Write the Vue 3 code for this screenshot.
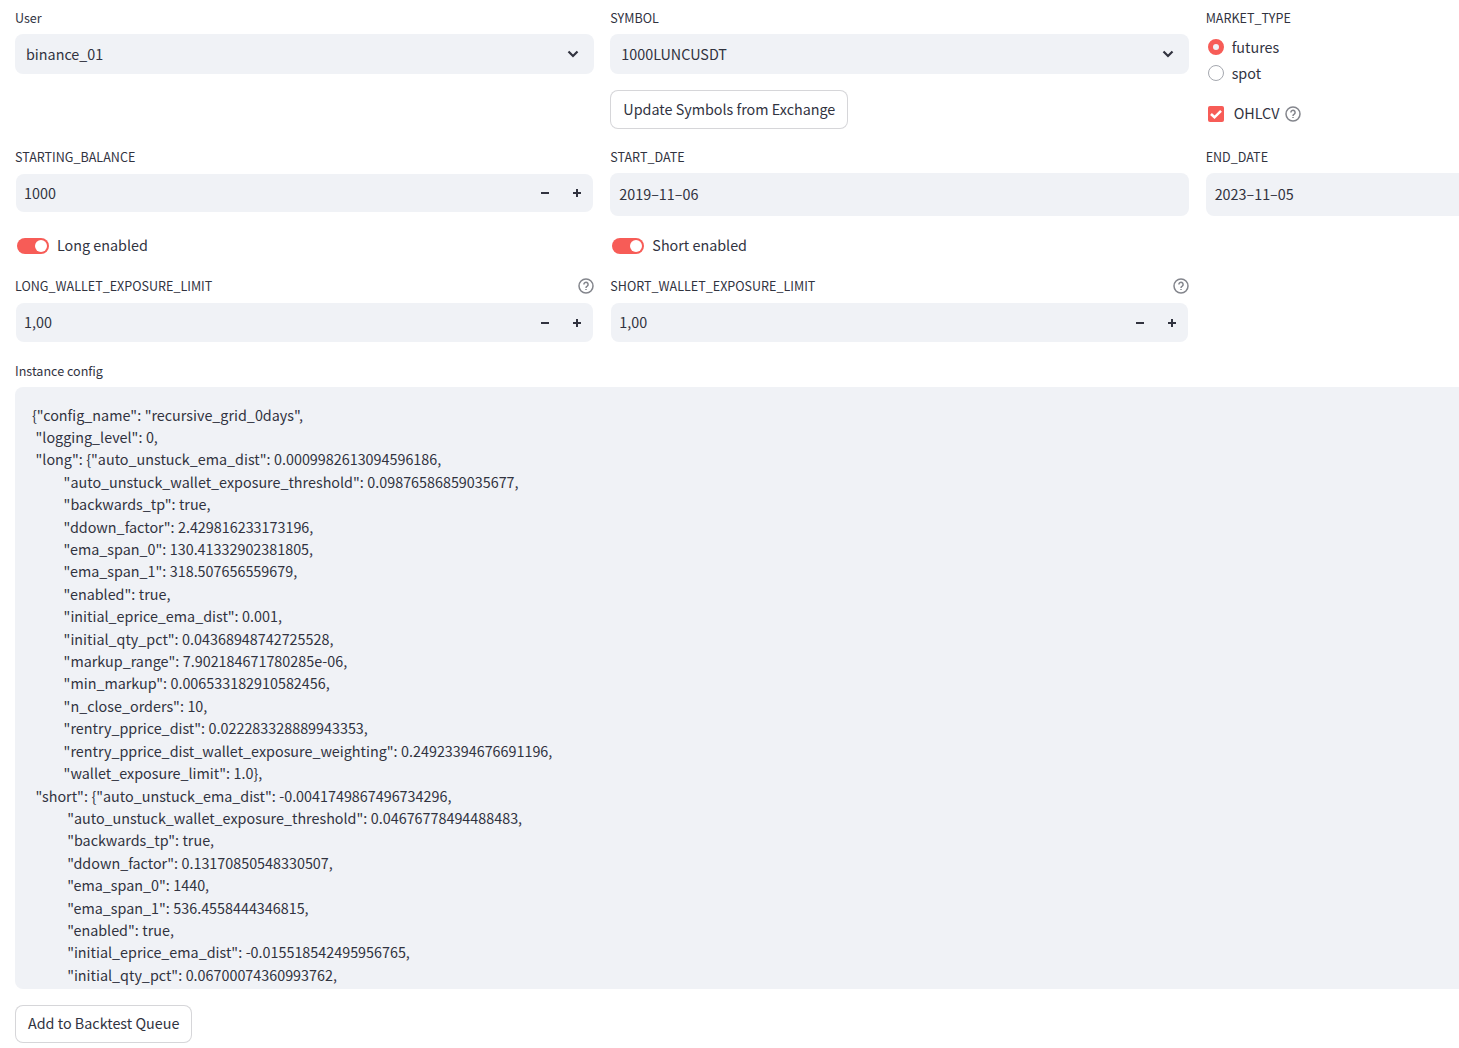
<script setup>
const config = `{"config_name": "recursive_grid_0days",
 "logging_level": 0,
 "long": {"auto_unstuck_ema_dist": 0.0009982613094596186,
         "auto_unstuck_wallet_exposure_threshold": 0.09876586859035677,
         "backwards_tp": true,
         "ddown_factor": 2.429816233173196,
         "ema_span_0": 130.41332902381805,
         "ema_span_1": 318.507656559679,
         "enabled": true,
         "initial_eprice_ema_dist": 0.001,
         "initial_qty_pct": 0.04368948742725528,
         "markup_range": 7.902184671780285e-06,
         "min_markup": 0.006533182910582456,
         "n_close_orders": 10,
         "rentry_pprice_dist": 0.022283328889943353,
         "rentry_pprice_dist_wallet_exposure_weighting": 0.24923394676691196,
         "wallet_exposure_limit": 1.0},
 "short": {"auto_unstuck_ema_dist": -0.0041749867496734296,
          "auto_unstuck_wallet_exposure_threshold": 0.04676778494488483,
          "backwards_tp": true,
          "ddown_factor": 0.13170850548330507,
          "ema_span_0": 1440,
          "ema_span_1": 536.4558444346815,
          "enabled": true,
          "initial_eprice_ema_dist": -0.015518542495956765,
          "initial_qty_pct": 0.06700074360993762,`
</script>

<template>
  <div class="page">
    <section class="row first">
      <div class="col">
        <div class="label">User</div>
        <div class="select">
          <span class="txt">binance_01</span>
          <svg class="chev" viewBox="0 0 12 8"><polyline points="1.5,1.5 6,6 10.5,1.5" /></svg>
        </div>
      </div>
      <div class="col">
        <div class="label">SYMBOL</div>
        <div class="select">
          <span class="txt">1000LUNCUSDT</span>
          <svg class="chev" viewBox="0 0 12 8"><polyline points="1.5,1.5 6,6 10.5,1.5" /></svg>
        </div>
        <button class="btn update">Update Symbols from Exchange</button>
      </div>
      <div class="col">
        <div class="label">MARKET_TYPE</div>
        <div class="radio"><span class="dot on"></span><span class="txt">futures</span></div>
        <div class="radio"><span class="dot"></span><span class="txt">spot</span></div>
        <div class="check">
          <span class="box">
            <svg viewBox="0 0 16 16"><polyline points="3,8 6.5,11.3 13,4.8" /></svg>
          </span>
          <span class="txt check-text">OHLCV</span>
          <svg class="help" viewBox="0 0 16 16">
            <circle cx="8" cy="8" r="7" />
            <path d="M5.9 6.4a2.1 2.1 0 1 1 3.3 1.7c-.8.5-1.2 1-1.2 1.8" />
            <path d="M8 11.1v1" />
          </svg>
        </div>
      </div>
    </section>

    <section class="row second">
      <div class="col">
        <div class="label">STARTING_BALANCE</div>
        <div class="number short-h">
          <span class="txt value">1000</span>
          <span class="step"><svg viewBox="0 0 10 10"><path d="M1 5h8" /></svg></span>
          <span class="step"><svg viewBox="0 0 10 10"><path d="M1 5h8M5 1v8" /></svg></span>
        </div>
      </div>
      <div class="col">
        <div class="label">START_DATE</div>
        <div class="date">2019–11–06</div>
      </div>
      <div class="col">
        <div class="label">END_DATE</div>
        <div class="date">2023–11–05</div>
      </div>
    </section>

    <section class="row third">
      <div class="toggle"><span class="track"><span class="knob"></span></span><span class="txt">Long enabled</span></div>
      <div class="toggle"><span class="track"><span class="knob"></span></span><span class="txt">Short enabled</span></div>
    </section>

    <section class="row fourth">
      <div class="col">
        <div class="label between">
          <span>LONG_WALLET_EXPOSURE_LIMIT</span>
          <svg class="help" viewBox="0 0 16 16">
            <circle cx="8" cy="8" r="7" />
            <path d="M5.9 6.4a2.1 2.1 0 1 1 3.3 1.7c-.8.5-1.2 1-1.2 1.8" />
            <path d="M8 11.1v1" />
          </svg>
        </div>
        <div class="number">
          <span class="txt value">1,00</span>
          <span class="step"><svg viewBox="0 0 10 10"><path d="M1 5h8" /></svg></span>
          <span class="step"><svg viewBox="0 0 10 10"><path d="M1 5h8M5 1v8" /></svg></span>
        </div>
      </div>
      <div class="col">
        <div class="label between">
          <span>SHORT_WALLET_EXPOSURE_LIMIT</span>
          <svg class="help" viewBox="0 0 16 16">
            <circle cx="8" cy="8" r="7" />
            <path d="M5.9 6.4a2.1 2.1 0 1 1 3.3 1.7c-.8.5-1.2 1-1.2 1.8" />
            <path d="M8 11.1v1" />
          </svg>
        </div>
        <div class="number">
          <span class="txt value">1,00</span>
          <span class="step"><svg viewBox="0 0 10 10"><path d="M1 5h8" /></svg></span>
          <span class="step"><svg viewBox="0 0 10 10"><path d="M1 5h8M5 1v8" /></svg></span>
        </div>
      </div>
    </section>

    <section class="config">
      <div class="label">Instance config</div>
      <div class="textarea">{{ config }}</div>
    </section>

    <button class="btn queue">Add to Backtest Queue</button>
  </div>
</template>

<style>
html, body { background: #fff; overflow: hidden; }
</style>

<style scoped>
.page {
  height: 1048px;
  box-sizing: border-box;
  padding: 8px 0 0 15px;
  overflow: hidden;
  font-family: "Noto Sans CJK SC", "Noto Sans", sans-serif;
  font-size: 14.35px;
  color: rgb(49, 51, 63);
}
.row {
  display: grid;
  grid-template-columns: 579px 579px 1fr;
  column-gap: 16.33px;
}
.second { margin-top: 18px; }
.third { margin-top: 18px; height: 24px; }
.fourth { margin-top: 18px; }
.col { min-width: 0; }
.txt { margin-bottom: 2px; }

.label {
  height: 20px;
  line-height: 20px;
  margin-bottom: 6px;
  font-size: 12.55px;
}
.between {
  display: flex;
  align-items: center;
  justify-content: space-between;
}

.select {
  height: 40px;
  display: flex;
  align-items: center;
  justify-content: space-between;
  padding: 0 15px 0 11px;
  background: rgb(240, 242, 246);
  border-radius: 8px;
}
.chev {
  width: 12px;
  height: 8px;
  fill: none;
  stroke: rgb(49, 51, 63);
  stroke-width: 2.2;
}

.btn {
  display: block;
  box-sizing: border-box;
  height: 39px;
  padding: 0 12px 2px;
  background: #fff;
  border: 1px solid rgba(49, 51, 63, 0.2);
  border-radius: 8px;
  color: inherit;
  font: inherit;
  white-space: nowrap;
}
.update { margin-top: 16px; width: 238px; }
.queue { margin-top: 16px; width: 177px; height: 38px; padding-bottom: 3px; }

.radio {
  height: 26px;
  display: flex;
  align-items: center;
  gap: 8px;
  padding-left: 2px;
}
.dot {
  box-sizing: border-box;
  width: 16px;
  height: 16px;
  border-radius: 50%;
  border: 1px solid rgb(165, 168, 175);
  background: #fff;
}
.dot.on {
  border: 5px solid #f75c57;
  background: rgb(240, 242, 246);
}
.check {
  height: 24px;
  margin-top: 16px;
  display: flex;
  align-items: center;
  padding-left: 2px;
}
.box {
  width: 16px;
  height: 16px;
  border-radius: 2px;
  background: #f75c57;
}
.box svg {
  display: block;
  fill: none;
  stroke: #fff;
  stroke-width: 2.6;
}
.check-text { margin-left: 10px; margin-right: 6px; margin-bottom: 3px; }
.help {
  width: 16px;
  height: 16px;
  flex: none;
  fill: none;
  stroke: rgba(49, 51, 63, 0.6);
  stroke-width: 1.5;
}

.number {
  height: 39px;
  margin: 7px 1px 0;
  display: flex;
  align-items: center;
  background: rgb(240, 242, 246);
  border-radius: 8px;
}
.short-h { height: 38px; }
.value { flex: 1; padding-left: 8px; }
.step {
  width: 32px;
  display: flex;
  justify-content: center;
}
.step svg {
  width: 10px;
  height: 10px;
  fill: none;
  stroke: rgb(49, 51, 63);
  stroke-width: 2;
}
.number:not(.short-h) .step svg { margin-top: 1px; }
.date {
  height: 43px;
  line-height: 41px;
  padding-left: 9px;
  background: rgb(240, 242, 246);
  border-radius: 8px 0 0 8px;
}
.second .col:nth-child(2) .date { border-radius: 8px; }

.toggle {
  display: flex;
  align-items: center;
  gap: 8px;
  padding-left: 2px;
  height: 24px;
}
.toggle .txt { margin-bottom: 4px; }
.track {
  width: 32px;
  height: 16px;
  display: flex;
  justify-content: flex-end;
  align-items: center;
  padding-right: 2px;
  box-sizing: border-box;
  background: #f75c57;
  border-radius: 8px;
}
.knob {
  width: 12px;
  height: 12px;
  border-radius: 50%;
  background: #fff;
}

.config { margin-top: 19px; }
.textarea {
  height: 602px;
  box-sizing: border-box;
  padding: 16.6px 17px 0;
  overflow: hidden;
  white-space: pre;
  word-spacing: 0.3px;
  line-height: 22.4px;
  background: rgb(240, 242, 246);
  border-radius: 8px 0 0 8px;
}
</style>
